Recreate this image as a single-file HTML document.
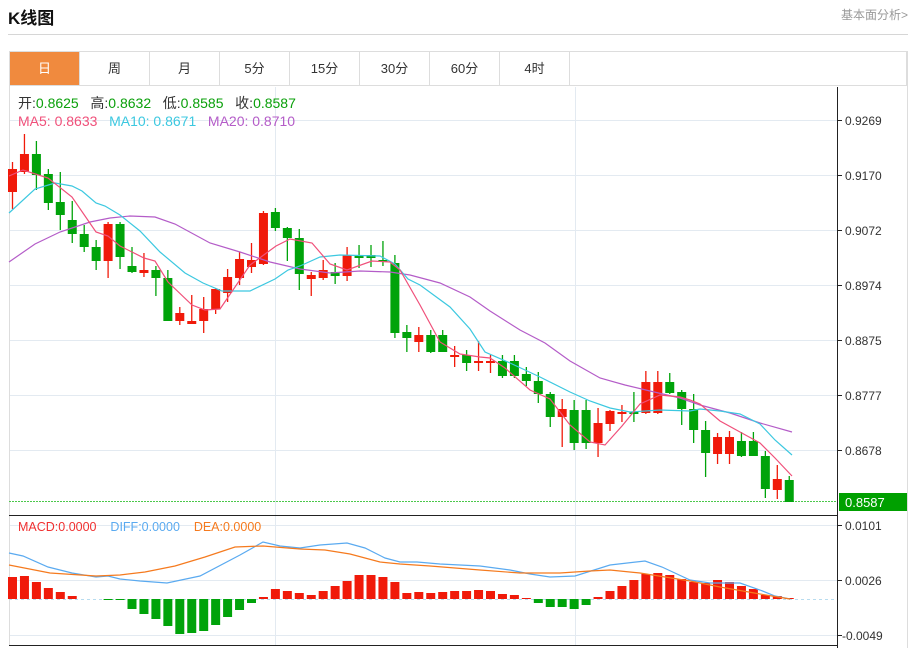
<!DOCTYPE html>
<html><head><meta charset="utf-8"><style>
body{margin:0;width:918px;height:648px;background:#fff;overflow:hidden;position:relative;font-family:"Liberation Sans","Noto Sans CJK SC",sans-serif}
.t{position:absolute;left:8px;top:4px;font-size:17px;font-weight:bold;color:#111}
.r{position:absolute;right:10px;top:6px;font-size:12px;color:#999}
.hl{position:absolute;left:8px;top:34px;width:900px;height:1px;background:#d6d6d6}
.tabs{position:absolute;left:9px;top:51px;width:898px;height:35px;border:1px solid #ddd;border-bottom:1px solid #ddd;box-sizing:border-box;display:flex}
.tabs div{width:70px;border-right:1px solid #ddd;text-align:center;line-height:33px;font-size:13px;color:#333;box-sizing:border-box}
.tabs div.a{background:#f08a3e;color:#fff}
svg{position:absolute;left:0;top:0}
</style></head><body>
<div class="t">K线图</div><div class="r">基本面分析&gt;</div><div class="hl"></div>
<div class="tabs"><div class="a">日</div><div>周</div><div>月</div><div>5分</div><div>15分</div><div>30分</div><div>60分</div><div>4时</div></div>
<svg id="s" width="918" height="648" xmlns="http://www.w3.org/2000/svg" font-family="Liberation Sans, Noto Sans CJK SC, sans-serif">
<g stroke="#e3eaf1" stroke-width="1">
<line x1="9" y1="120.5" x2="837" y2="120.5"/><line x1="9" y1="175.5" x2="837" y2="175.5"/><line x1="9" y1="230.5" x2="837" y2="230.5"/><line x1="9" y1="285.5" x2="837" y2="285.5"/><line x1="9" y1="340.5" x2="837" y2="340.5"/><line x1="9" y1="395.5" x2="837" y2="395.5"/><line x1="9" y1="450.5" x2="837" y2="450.5"/>
<line x1="9" y1="525.5" x2="837" y2="525.5"/><line x1="9" y1="580.5" x2="837" y2="580.5"/><line x1="9" y1="635.5" x2="837" y2="635.5"/>
<line x1="275.5" y1="87" x2="275.5" y2="645"/><line x1="575.5" y1="87" x2="575.5" y2="645"/>
</g>
<line x1="9.5" y1="86" x2="9.5" y2="645" stroke="#ddd"/>
<line x1="907.5" y1="51" x2="907.5" y2="648" stroke="#ddd"/>
<line x1="837.5" y1="87" x2="837.5" y2="648" stroke="#222"/>
<line x1="9" y1="515.5" x2="837" y2="515.5" stroke="#222"/>
<line x1="9" y1="645.5" x2="837" y2="645.5" stroke="#222"/>
<line x1="9" y1="599.5" x2="837" y2="599.5" stroke="#b8dcef" stroke-dasharray="3,3"/>
<line x1="9" y1="501.5" x2="837" y2="501.5" stroke="#4cc84c" stroke-dasharray="2,1"/>
<g stroke="#222"><line x1="837" y1="120.5" x2="842" y2="120.5"/><line x1="837" y1="175.5" x2="842" y2="175.5"/><line x1="837" y1="230.5" x2="842" y2="230.5"/><line x1="837" y1="285.5" x2="842" y2="285.5"/><line x1="837" y1="340.5" x2="842" y2="340.5"/><line x1="837" y1="395.5" x2="842" y2="395.5"/><line x1="837" y1="450.5" x2="842" y2="450.5"/><line x1="837" y1="525.5" x2="842" y2="525.5"/><line x1="837" y1="580.5" x2="842" y2="580.5"/><line x1="837" y1="635.5" x2="842" y2="635.5"/></g>
<g font-size="12" fill="#333">
<text x="845" y="125">0.9269</text><text x="845" y="180">0.9170</text><text x="845" y="235">0.9072</text><text x="845" y="290">0.8974</text><text x="845" y="345">0.8875</text><text x="845" y="400">0.8777</text><text x="845" y="455">0.8678</text>
<text x="845" y="530">0.0101</text><text x="845" y="585">0.0026</text><text x="842" y="640">-0.0049</text>
</g>
<rect x="839" y="493" width="68" height="18" fill="#00a000"/>
<text x="845" y="507" font-size="13" fill="#fff">0.8587</text>
<g id="c"></g>
<polyline fill="none" stroke="#b45cc8" stroke-width="1.2" points="9,262 35,244 60,232 90,222 110,218 130,216 155,217 175,224 210,243 240,252 270,262 300,269 330,273 360,271 390,272 410,275 440,283 470,297 490,311 520,330 545,343 570,361 600,378 625,385 650,391 680,398 700,405 730,413 760,423 792,432"/>
<polyline fill="none" stroke="#3cc8e0" stroke-width="1.2" points="9,213 35,189 55,183 72,186 82,191 96,203 105,206 120,215 140,231 160,252 185,273 203,283 222,291 250,291 275,279 288,270 300,266 320,257 340,255 380,256 395,264 408,279 420,285 450,307 470,329 485,352 510,363 540,377 570,392 590,401 610,408 630,412 660,410 690,411 700,409 720,411 740,414 760,424 775,440 792,455"/>
<polyline fill="none" stroke="#f0507a" stroke-width="1.2" points="9,176 23,170 48,178 72,197 96,232 108,236 120,246 144,258 155,261 168,282 192,305 205,310 220,309 250,265 276,246 290,239 312,243 330,264 347,270 372,261 390,262 400,270 420,305 440,342 460,354 480,357 490,358 505,368 530,390 550,399 570,425 590,442 605,445 622,426 640,404 660,395 680,397 690,400 700,404 720,421 740,432 760,443 775,458 792,476"/>
<polyline fill="none" stroke="#5aaaf0" stroke-width="1.2" points="9,553 23,556 48,567 72,573 96,577 108,576 120,579 140,581 167,583 200,576 240,555 263,542 280,546 300,548 320,545 347,543 365,548 385,558 400,562 417,562 440,564 480,566 510,570 530,574 550,577 575,576 610,565 645,561 662,567 690,580 710,583 740,583 760,590 775,596 790,599"/>
<polyline fill="none" stroke="#f57a1e" stroke-width="1.2" points="9,565 50,573 96,576 120,575 145,572 175,566 205,557 235,547 263,546 300,549 325,550 350,554 380,562 400,564 430,566 480,570 520,573 560,573 590,571 610,570 640,573 665,577 690,581 720,587 760,594 790,599"/>
<text x="18" y="108" font-size="14" fill="#333" xml:space="preserve">开:<tspan fill="#0aa00a">0.8625</tspan>   高:<tspan fill="#0aa00a">0.8632</tspan>   低:<tspan fill="#0aa00a">0.8585</tspan>   收:<tspan fill="#0aa00a">0.8587</tspan></text>
<text x="18" y="126" font-size="14" xml:space="preserve"><tspan fill="#f0507a">MA5: 0.8633</tspan>   <tspan fill="#3cc8e0">MA10: 0.8671</tspan>   <tspan fill="#b45cc8">MA20: 0.8710</tspan></text>
<text x="18" y="531" font-size="12.5" xml:space="preserve"><tspan fill="#f03030">MACD:0.0000</tspan>    <tspan fill="#5aaaf0">DIFF:0.0000</tspan>    <tspan fill="#f57a1e">DEA:0.0000</tspan></text>
</svg>
<script>
var C=[["r",169,192,162,209],["r",154,172,134,174],["g",154,175,141,190],["g",174,203,169,210],["g",202,215,172,230],["g",220,234,201,243],["g",234,247,225,252],["g",247,261,240,270],["r",224,261,222,278],["g",224,257,222,269],["g",266,272,247,273],["r",270,273,253,277],["g",270,278,266,296],["g",278,321,270,321],["r",313,321,307,325],["r",321,324,295,324],["r",309,321,297,333],["r",289,309,288,314],["r",277,293,269,302],["r",259,278,252,285],["r",260,267,243,273],["r",213,264,211,265],["g",212,228,208,231],["g",228,238,227,261],["g",238,274,229,290],["r",275,279,272,296],["r",270,278,260,280],["g",272,276,263,284],["r",255,276,247,281],["g",255,258,245,268],["g",255,258,245,267],["g",260,262,241,266],["g",263,333,255,338],["g",332,338,325,352],["r",335,342,327,352],["g",335,352,330,353],["g",335,352,330,352],["r",355,357,346,367],["g",355,363,350,371],["r",361,363,341,371],["r",361,363,355,373],["g",361,376,355,378],["g",361,376,355,378],["g",374,381,367,386],["g",381,394,372,403],["g",394,417,392,427],["r",409,417,399,447],["g",410,443,400,450],["g",410,443,400,449],["r",423,443,408,457],["r",411,424,410,431],["r",412,414,405,422],["g",412,414,392,422],["r",382,413,371,414],["r",382,413,371,414],["g",382,393,373,394],["g",392,409,390,425],["g",409,430,394,443],["g",430,453,421,477],["r",437,454,433,464],["r",437,454,431,464],["g",441,456,432,457],["g",441,456,432,456],["g",456,489,451,498],["r",479,490,465,499],["g",480,502,476,502]];
var M=[577,576,582,588,592,596,599,599,600,600,609,614,619,626,634,633,631,625,617,610,603,597,589,591,593,595,591,586,581,575,575,577,582,593,592,593,592,591,591,590,591,594,595,598,603,607,607,609,605,597,591,586,580,574,573,575,579,582,583,580,582,586,589,595,596,598];
var h="";
for(var i=0;i<C.length;i++){var c=C[i],x=12.5+11.95*i,col=c[0]=="r"?"#f01a0a":"#00a30a";
h+='<line x1="'+x+'" y1="'+c[3]+'" x2="'+x+'" y2="'+c[4]+'" stroke="'+col+'" stroke-width="1.3"/>';
h+='<rect x="'+(x-4.5)+'" y="'+c[1]+'" width="9" height="'+Math.max(2,c[2]-c[1])+'" fill="'+col+'"/>';
var m=M[i];if(m<599)h+='<rect x="'+(x-4.5)+'" y="'+m+'" width="9" height="'+(599-m)+'" fill="#f01a0a"/>';else if(m>599)h+='<rect x="'+(x-4.5)+'" y="599" width="9" height="'+(m-599)+'" fill="#00a30a"/>';}
document.getElementById("c").innerHTML=h;
</script>
</body></html>
